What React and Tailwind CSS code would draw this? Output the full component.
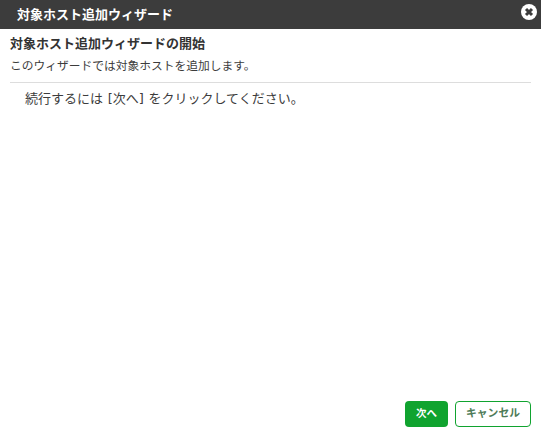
import React from "react";

function CloseIcon() {
  return (
    <svg width="16" height="16" viewBox="0 0 16 16">
      <circle cx="8" cy="8" r="8" fill="#ffffff" />
      <path
        d="M5 5 L11 11 M11 5 L5 11"
        stroke="#3c3c3c"
        strokeWidth="3"
      />
    </svg>
  );
}

export default function App() {
  return (
    <div className="w-[541px] h-[432px] bg-white flex flex-col overflow-hidden [font-family:'DejaVu_Sans','Noto_Sans_CJK_JP',sans-serif]">
      <div className="h-[29px] bg-[#3c3c3c] flex items-start justify-between pl-[17px] pr-[4px] shrink-0">
        <span className="text-[13px] leading-[29px] font-bold text-white">
          対象ホスト追加ウィザード
        </span>
        <div className="mt-[4px]">
          <CloseIcon />
        </div>
      </div>

      <div className="flex-1 px-[10px]">
        <h1 className="text-[13px] font-bold text-[#333333] leading-[18px] mt-[6px]">
          対象ホスト追加ウィザードの開始
        </h1>
        <p className="text-[11.75px] text-[#3c3c3c] leading-[16px] mt-[5px] pb-[8px] border-b border-[#dddddd]">
          このウィザードでは対象ホストを追加します。
        </p>
        <p className="text-[13px] text-[#3c3c3c] leading-[18px] mt-[7px] pl-[15px] [word-spacing:0.5px]">
          続行するには [次へ] をクリックしてください。
        </p>
      </div>

      <div className="flex justify-end gap-[7px] pr-[10px] pb-[5px] shrink-0">
        <button className="w-[43px] h-[26px] rounded-[4px] bg-[#10a32f] text-white text-[10.5px] font-bold">
          次へ
        </button>
        <button className="w-[76px] h-[26px] rounded-[4px] bg-white border border-[#10a32f] text-[#4d7a57] text-[10.8px] font-bold">
          キャンセル
        </button>
      </div>
    </div>
  );
}
